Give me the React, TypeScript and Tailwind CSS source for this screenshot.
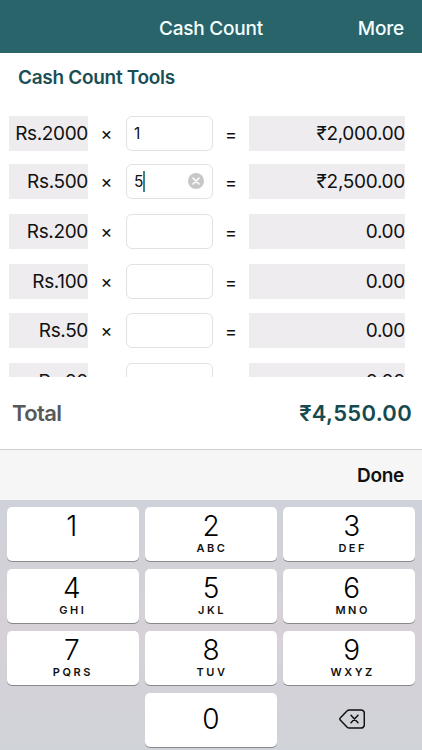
import React from "react";

const rows = [
  { note: "Rs.2000", count: "1", amount: "₹2,000.00" },
  { note: "Rs.500", count: "5", amount: "₹2,500.00", active: true },
  { note: "Rs.200", count: "", amount: "0.00" },
  { note: "Rs.100", count: "", amount: "0.00" },
  { note: "Rs.50", count: "", amount: "0.00" },
  { note: "Rs.20", count: "", amount: "0.00" },
];

const keys = [
  { digit: "1", letters: "" },
  { digit: "2", letters: "ABC" },
  { digit: "3", letters: "DEF" },
  { digit: "4", letters: "GHI" },
  { digit: "5", letters: "JKL" },
  { digit: "6", letters: "MNO" },
  { digit: "7", letters: "PQRS" },
  { digit: "8", letters: "TUV" },
  { digit: "9", letters: "WXYZ" },
];

const keyClass =
  "h-[53.5px] rounded-[5px] bg-white shadow-[0_1px_0_#898a8d] flex flex-col items-center nth-[3n]:pl-[5px] nth-[3n+1]:pr-[2px]";

const ClearIcon = () => (
  <svg className="ml-auto h-4 w-4" viewBox="0 0 16 16" fill="none">
    <circle cx="8" cy="8" r="8" fill="#c7c7c9" />
    <path d="M5 5l6 6M11 5l-6 6" stroke="#fff" strokeWidth="1.6" strokeLinecap="round" />
  </svg>
);

const DeleteIcon = () => (
  <svg className="h-5 w-[26px]" viewBox="0 0 26 20" fill="none" stroke="#111" strokeWidth="1.5">
    <path
      d="M10.2.9H22a3.3 3.3 0 0 1 3.3 3.3v11.6a3.3 3.3 0 0 1-3.3 3.3H10.2a2.8 2.8 0 0 1-2-.9L1.2 11a1.4 1.4 0 0 1 0-2l7-7.2a2.8 2.8 0 0 1 2-.9Z"
      strokeLinejoin="round"
    />
    <path d="M12 6.2l7 7.6M19 6.2l-7 7.6" strokeLinecap="round" />
  </svg>
);

const App: React.FC = () => {
  return (
    <div className="h-[750px] w-[422px] overflow-hidden bg-white font-['Inter',sans-serif] text-[#111]">
      {/* Header */}
      <header className="grid h-[53px] grid-cols-[1fr_auto_1fr] items-center bg-[#28646a] pt-[5px] text-[19px] font-medium text-[#f4ffff]">
        <h1 className="col-start-2 tracking-[-0.2px]">Cash Count</h1>
        <button className="justify-self-end pr-[18px] tracking-[-0.2px]">More</button>
      </header>

      <h2 className="h-[63px] pl-[18px] pt-[11px] text-[19px] font-semibold leading-7 tracking-[-0.3px] text-[#1b4f55]">
        Cash Count Tools
      </h2>

      {/* Notes list, the last row is cut off by the scroll area */}
      <div className="flex h-[261px] flex-col gap-[14.2px] overflow-hidden pl-[9px]">
        {rows.map((row) => (
          <div
            key={row.note}
            className={`flex h-[35px] shrink-0 text-[19px] leading-[35px] last:mt-px last:leading-[38px] ${row.active ? "-mt-px mb-px" : ""}`}
          >
            <div className="w-[79px] bg-[#eeecef] text-right tracking-[-0.35px]">{row.note}</div>
            <div className="w-[37px] text-center text-lg leading-[inherit]">×</div>
            <div className="ml-px flex w-[87px] items-center rounded-[6px] border border-[#e2e2e2] pb-px pl-[7px] pr-2 text-[15.5px]">
              {row.count}
              {row.active && <span className="h-[21px] w-[2px] bg-[#3d8589]" />}
              {row.active && <ClearIcon />}
            </div>
            <div className="w-9 pt-px text-center text-lg leading-[inherit]">=</div>
            <div className="w-[156px] bg-[#eeecef] text-right tracking-[-0.3px]">{row.amount}</div>
          </div>
        ))}
      </div>

      {/* Total */}
      <div className="flex h-[72px] items-center justify-between pl-[12px] pr-[10px] text-[22px] font-semibold">
        <span className="tracking-[-0.6px] text-[#58595a]">Total</span>
        <span className="tracking-[0.3px] text-[#164a50]">₹4,550.00</span>
      </div>

      {/* Keyboard */}
      <div className="flex h-[51px] items-center justify-end border-t border-[#cfcfd1] bg-[#f6f6f7] pr-[18px] pt-[3px] text-[19px] font-semibold tracking-[-0.3px]">
        Done
      </div>
      <div className="grid h-[250px] grid-cols-3 content-start gap-x-[6.5px] gap-y-[8.5px] bg-linear-to-b from-[#cfd2da] via-[#d6d1d7] to-[#d0d3d9] pl-[7px] pr-[7px] pt-[7px]">
        {keys.map((key) => (
          <button key={key.digit} className={keyClass}>
            <span className="mt-[2px] text-[28px] leading-[34px] font-light text-black">
              {key.digit}
            </span>
            <span className="pl-[2px] text-[11px] font-semibold leading-[11px] tracking-[2.5px]">
              {key.letters}
            </span>
          </button>
        ))}
        <button className={`${keyClass} col-start-2 justify-center pb-[2px]`}>
          <span className="pl-[2px] text-[28px] font-light leading-[32px] text-black">0</span>
        </button>
        <button className="flex items-center justify-center pb-[1px] pl-[6px]">
          <DeleteIcon />
        </button>
      </div>
    </div>
  );
};

export default App;
